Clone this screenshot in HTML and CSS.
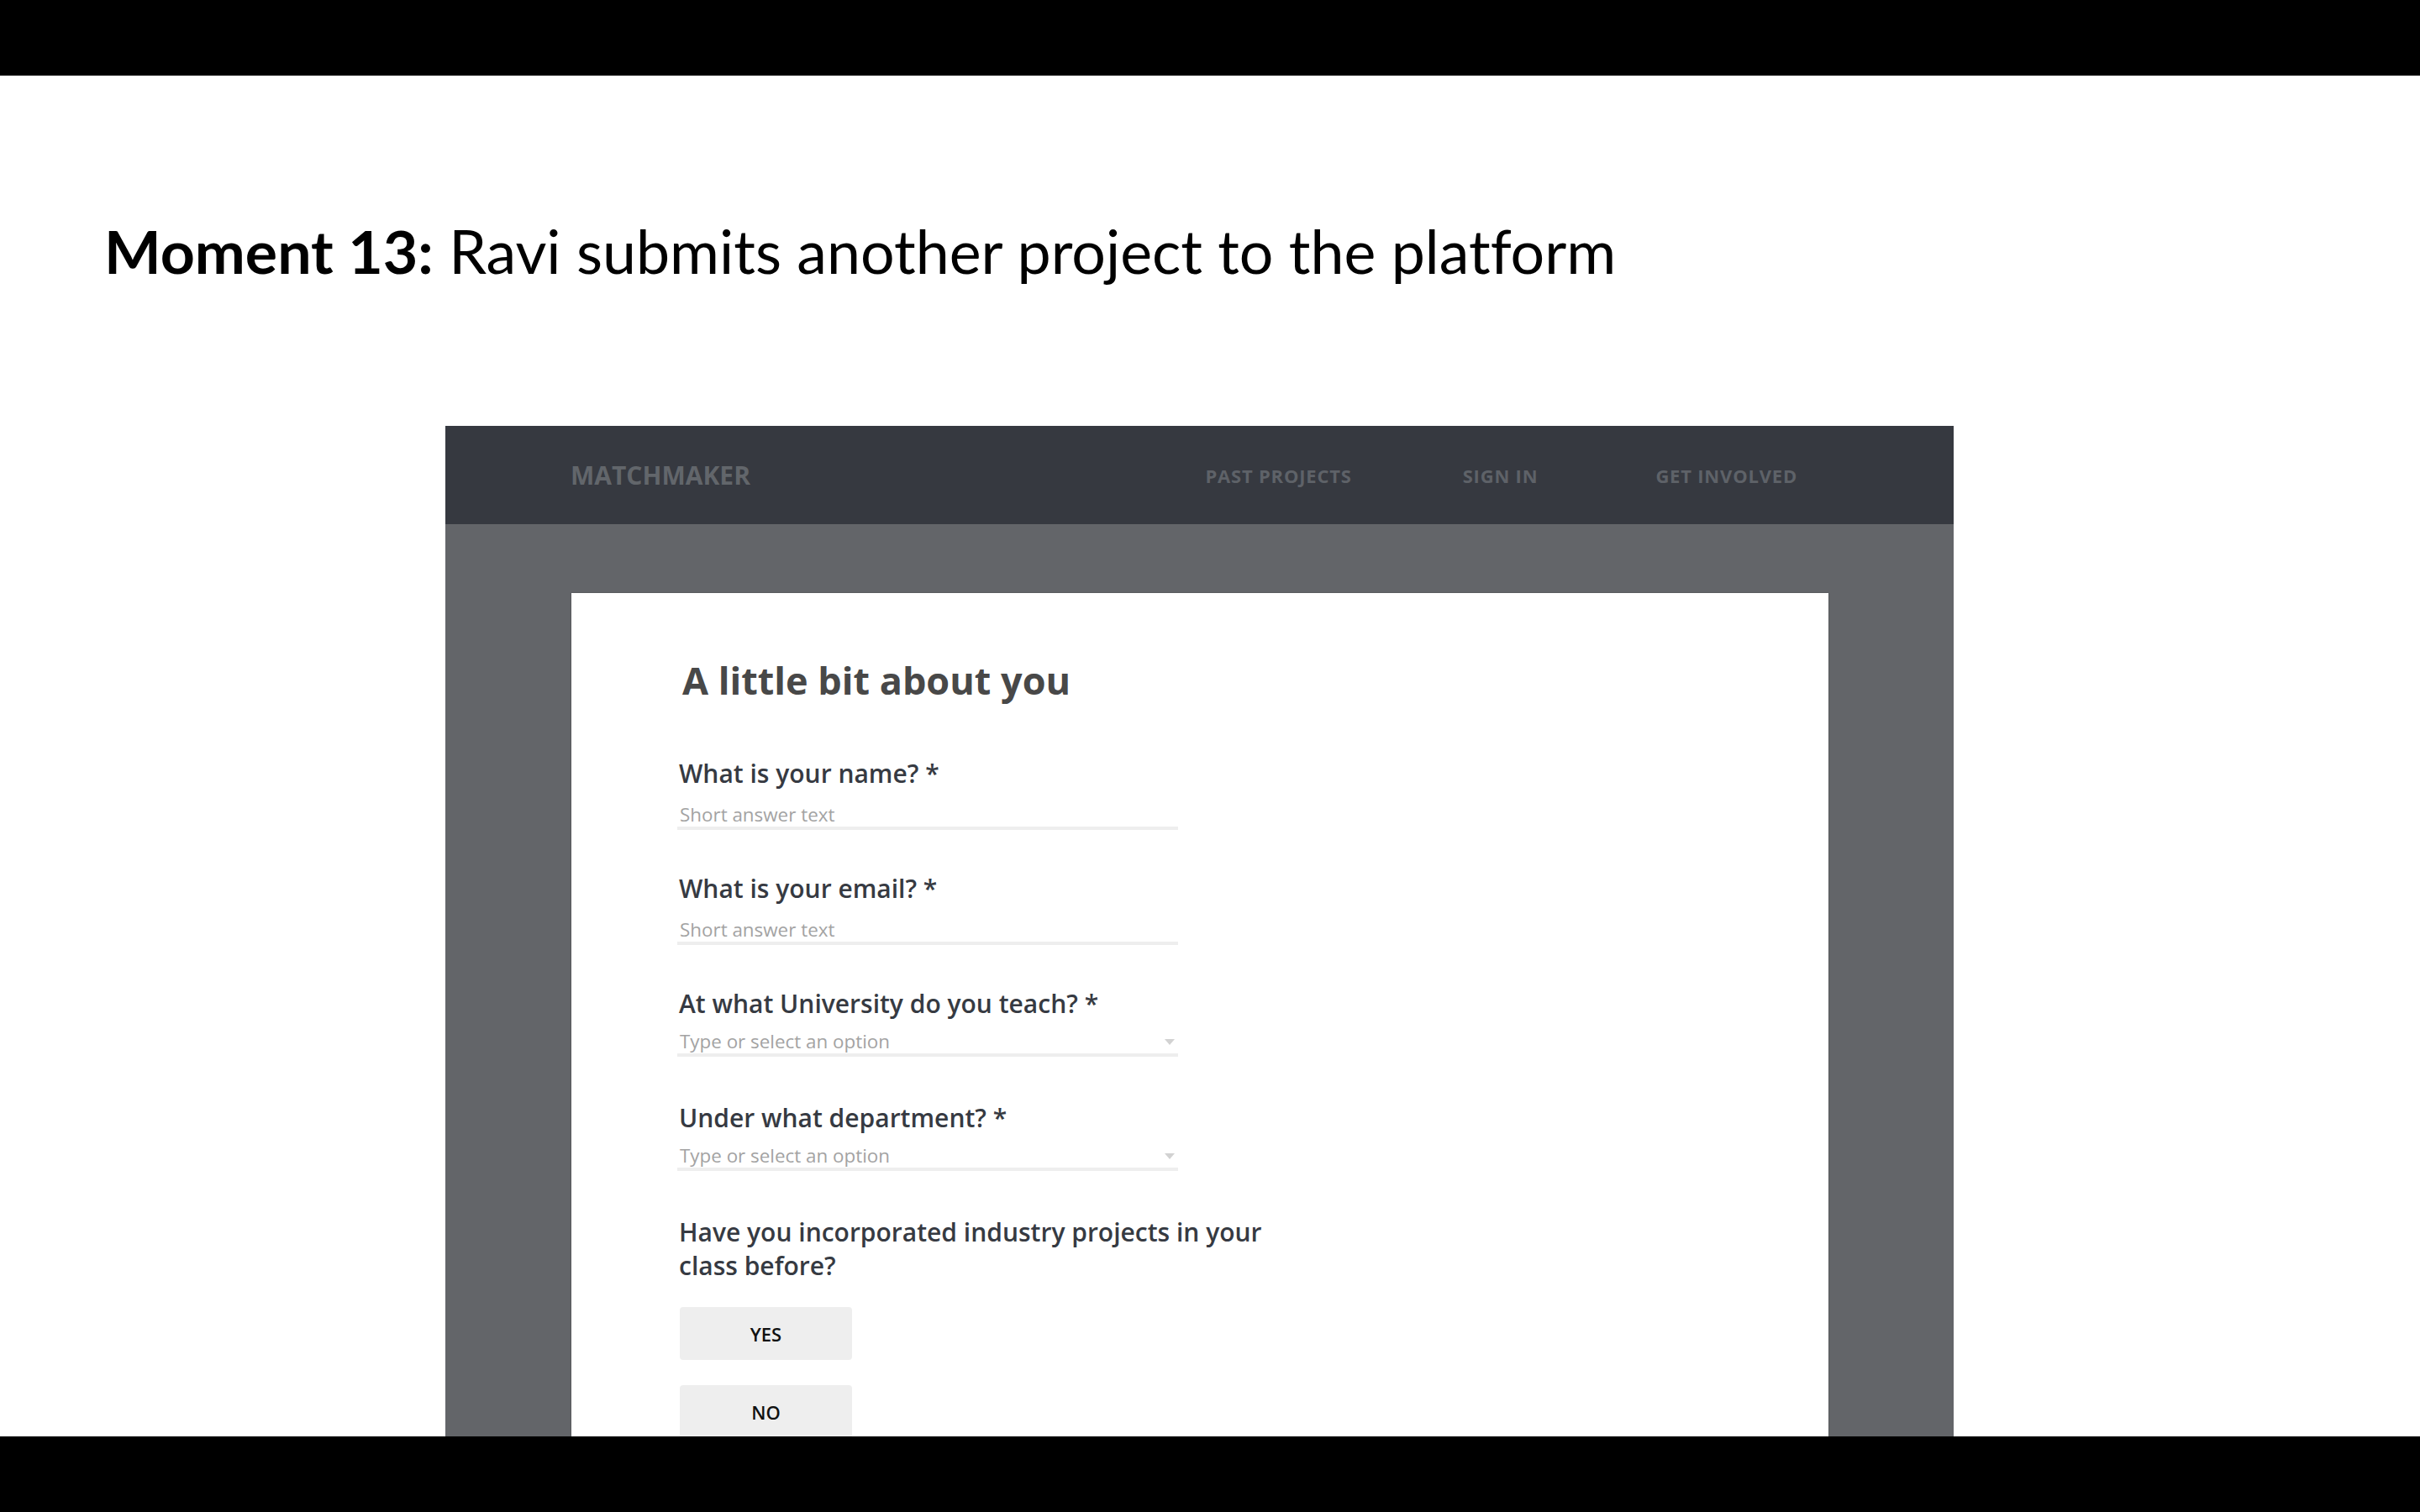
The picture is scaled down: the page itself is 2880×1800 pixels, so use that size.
FILE: index.html
```html
<!DOCTYPE html>
<html lang="en">
<head>
<meta charset="utf-8">
<title>Moment 13</title>
<link rel="stylesheet" href="styles.css">
</head>
<body>
<div class="screen">
  <div class="letterbox"></div>
  <main class="slide">
    <h1 class="title"><strong>Moment 13:</strong> Ravi submits another project to the platform</h1>
    <div class="mock">
      <header class="nav">
        <div class="brand">MATCHMAKER</div>
        <nav class="links">
          <span class="link">PAST PROJECTS</span>
          <span class="link">SIGN IN</span>
          <span class="link link-last">GET INVOLVED</span>
        </nav>
      </header>
      <div class="mock-body">
        <section class="card">
          <h2 class="card-title">A little bit about you</h2>

          <div class="field field-text">
            <div class="label">What is your name? *</div>
            <div class="input">Short answer text</div>
          </div>

          <div class="field field-text">
            <div class="label">What is your email? *</div>
            <div class="input">Short answer text</div>
          </div>

          <div class="field field-select">
            <div class="label">At what University do you teach? *</div>
            <div class="input"><span>Type or select an option</span><svg class="caret" width="12" height="7" viewBox="0 0 12 7"><path d="M0 0 L12 0 L6 7 Z"/></svg></div>
          </div>

          <div class="field field-select">
            <div class="label">Under what department? *</div>
            <div class="input"><span>Type or select an option</span><svg class="caret" width="12" height="7" viewBox="0 0 12 7"><path d="M0 0 L12 0 L6 7 Z"/></svg></div>
          </div>

          <div class="field field-choice">
            <div class="label label-wide">Have you incorporated industry projects in your class before?</div>
            <div class="choices">
              <div class="choice">YES</div>
              <div class="choice">NO</div>
            </div>
          </div>
        </section>
      </div>
    </div>
  </main>
  <div class="letterbox"></div>
</div>
</body>
</html>
```

FILE: styles.css
```css
html, body {
  margin: 0;
  padding: 0;
  background: #000;
}

.screen {
  width: 2880px;
  height: 1800px;
  display: flex;
  flex-direction: column;
}

.letterbox {
  height: 90px;
  flex: 0 0 90px;
  background: #000;
}

.slide {
  flex: 1 1 auto;
  background: #fff;
  overflow: hidden;
}

.title {
  margin: 165px 0 0 124px;
  font-family: Lato, "Open Sans", sans-serif;
  font-size: 71.7px;
  line-height: 86.4px;
  font-weight: 400;
  color: #000;
  white-space: nowrap;
  font-variant-ligatures: none;
  font-feature-settings: "liga" 0, "clig" 0;
}

.title strong {
  font-weight: 700;
}

.mock {
  margin: 166px 0 0 530px;
  width: 1795px;
  font-family: "Open Sans", "Noto Sans", sans-serif;
}

.nav {
  height: 117px;
  background: #363940;
  display: flex;
  align-items: center;
  justify-content: space-between;
  padding: 0 186px 0 149px;
  box-sizing: border-box;
}

.brand {
  font-size: 30px;
  font-weight: 700;
  color: #62666b;
  line-height: 40px;
}

.links {
  display: flex;
  gap: 132px;
}

.link {
  font-size: 22px;
  font-weight: 700;
  letter-spacing: 0.8px;
  color: #5e6268;
  line-height: 30px;
}

.link-last {
  margin-left: 8px;
}

.mock-body {
  background: #636569;
  padding: 82px 149px 0 150px;
}

.card {
  background: #fff;
  padding: 78px 0 80px 126px;
  box-shadow: 0 0 2px rgba(0, 0, 0, 0.25);
}

.card-title {
  margin: 0 0 65px 6px;
  font-size: 45px;
  line-height: 52px;
  font-weight: 700;
  color: #484848;
}

.field-text {
  margin-bottom: 50px;
}

.field-select {
  margin-bottom: 53px;
}

.label {
  font-size: 30px;
  line-height: 40px;
  font-weight: 600;
  color: #363a42;
  padding-left: 2px;
}

.field-text .label {
  margin-bottom: 15px;
}

.field-select .label {
  margin-bottom: 11px;
}

.label-wide {
  width: 740px;
  margin-bottom: 29px;
}

.input {
  width: 596px;
  box-sizing: border-box;
  padding-left: 3px;
  font-size: 22.4px;
  line-height: 28px;
  font-weight: 400;
  color: #a3a3a3;
  border-bottom: 4px solid #eeeeee;
  display: flex;
  justify-content: space-between;
  align-items: center;
}

.caret {
  margin-right: 4px;
  fill: #d2d2d2;
}

.choices {
  display: flex;
  flex-direction: column;
  gap: 30px;
  margin-left: 3px;
}

.choice {
  width: 205px;
  height: 63px;
  background: #eeeeee;
  border-radius: 4px;
  display: flex;
  align-items: center;
  justify-content: center;
  font-size: 22px;
  font-weight: 600;
  color: #111;
}
```
